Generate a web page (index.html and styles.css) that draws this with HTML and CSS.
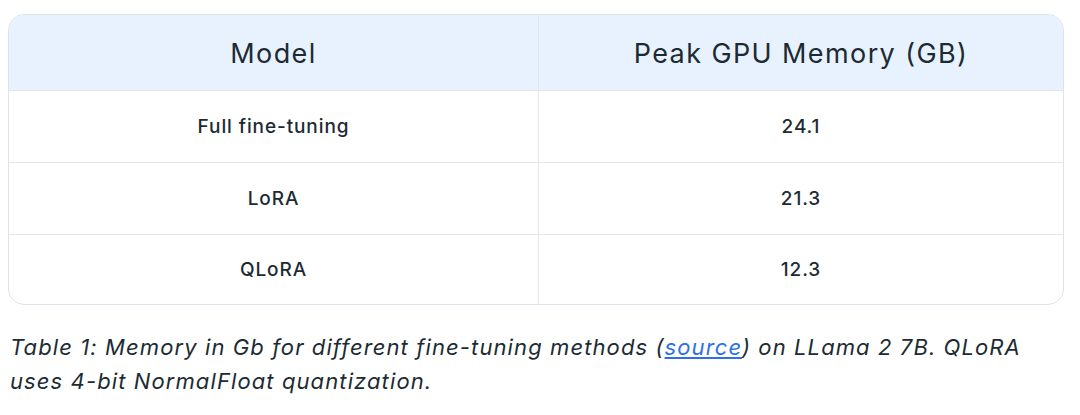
FILE: index.html
```html
<!DOCTYPE html>
<html>
<head>
<meta charset="utf-8">
<link rel="stylesheet" href="styles.css">
</head>
<body>
<div class="wrap">
  <div class="table">
    <div class="row head">
      <div class="cell">Model</div>
      <div class="cell">Peak GPU Memory (GB)</div>
    </div>
    <div class="row">
      <div class="cell">Full fine-tuning</div>
      <div class="cell">24.1</div>
    </div>
    <div class="row">
      <div class="cell">LoRA</div>
      <div class="cell">21.3</div>
    </div>
    <div class="row last">
      <div class="cell">QLoRA</div>
      <div class="cell">12.3</div>
    </div>
  </div>
  <p class="caption">Table 1: Memory in Gb for different fine-tuning methods (<a href="#">source</a>) on LLama 2 7B. QLoRA uses 4-bit NormalFloat quantization.</p>
</div>
</body>
</html>
```
FILE: styles.css
```css
html, body { margin: 0; padding: 0; background: #fff; }
body { font-family: Inter, "Noto Sans", sans-serif; color: #1c2b33; }
.wrap { padding: 14px 16px 0 8px; }
.table {
  border: 1.5px solid #dde3ea;
  border-radius: 16px;
  overflow: hidden;
}
.row { display: grid; grid-template-columns: 529px 1fr; border-top: 1.5px solid #e2e7ee; height: 71px; }
.row.head { border-top: none; background: #e8f2fe; height: 75px; }
.row.last { height: 69px; }
.cell { display: flex; align-items: center; justify-content: center; font-size: 19px; font-weight: 500; letter-spacing: 0.9px; }
.row.head .cell { font-size: 27px; font-weight: 400; letter-spacing: 1.4px; padding-top: 2px; }
.cell + .cell { border-left: 1.5px solid #e2e7ee; }
.caption {
  margin: 25px 0 0 2px;
  max-width: 1040px;
  font-size: 22px;
  line-height: 34px;
  font-style: italic;
  color: #1c2b33;
  letter-spacing: 1.1px;
}
.caption a { color: #2f6fe8; text-decoration: underline; }
```
